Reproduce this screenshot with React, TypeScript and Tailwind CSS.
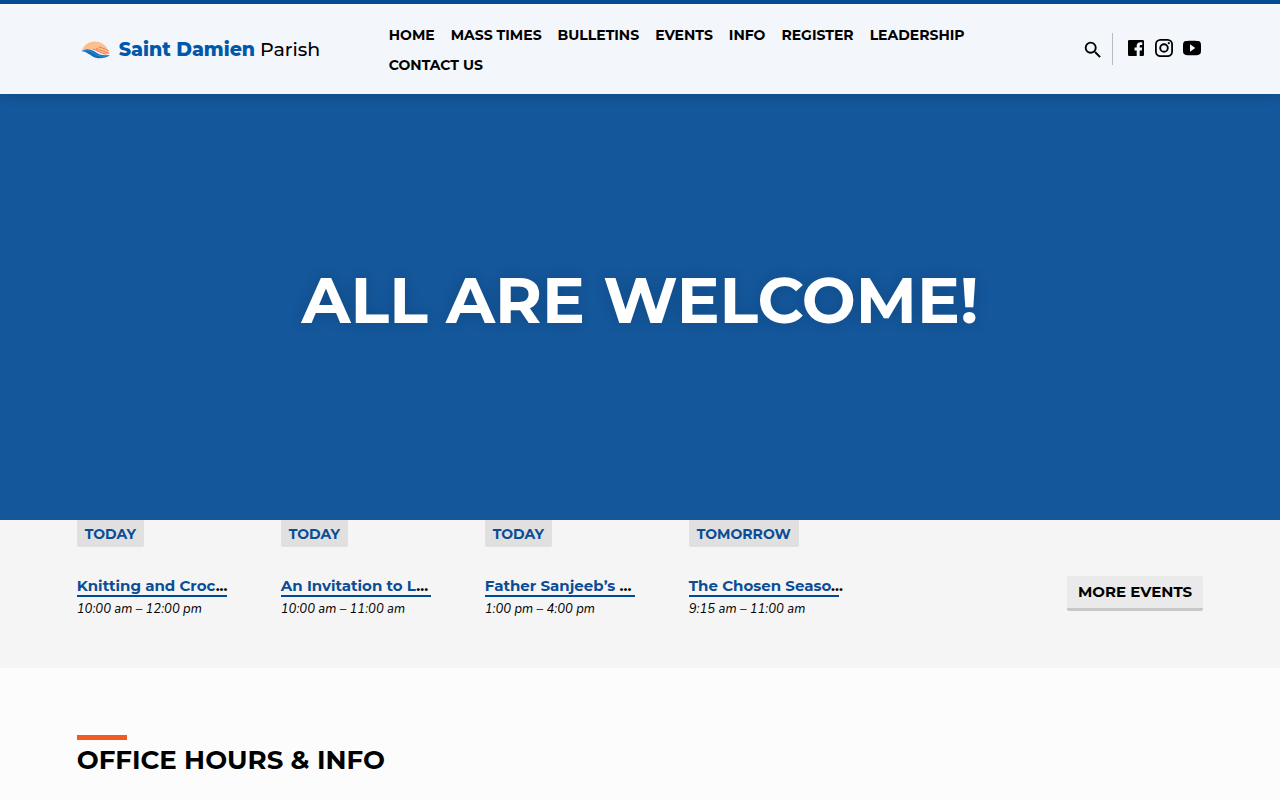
import { MdSearch } from "react-icons/md"

const heading = "font-['Montserrat','Inter',sans-serif]"

const navItems = ["Home", "Mass Times", "Bulletins", "Events", "Info", "Register", "Leadership", "Contact Us"]

const events = [
  { day: "Today", title: "Knitting and Croc", time: "10:00 am – 12:00 pm" },
  { day: "Today", title: "An Invitation to L", time: "10:00 am – 11:00 am" },
  { day: "Today", title: "Father Sanjeeb’s ", time: "1:00 pm – 4:00 pm" },
  { day: "Tomorrow", title: "The Chosen Seaso", time: "9:15 am – 11:00 am" },
]

function LogoMark() {
  return (
    <svg width="30" height="18" viewBox="0 0 30 18" aria-hidden="true">
      <path d="M0.500 9.500C3.500 3.500 8 0.500 13.500 0.500c6.500 0 10.500 3.500 13 7l-1 0.500 3 2-1.500 0.500 2 2-3.500 1C20 14 15 8.500 9 8.200 5.500 8 3 8 0.500 9.500Z" fill="#fcc08f" />
      <path d="M12 8c4 1 8 4.500 13.500 5.200M15 7.500c4 1 7.500 3.300 12.500 4.500M18 6c3.500 0.700 6 2.200 9.500 3.500" fill="none" stroke="#ee7552" strokeWidth="1" strokeDasharray="3 0.500" />
      <path d="M0.500 10.300C5 7.300 10 8 14 10.800c4 3 8 4.200 15 3.200-3 2.500-8 3.500-12 3.200C10.500 16.700 7 10.500 0.500 10.300Z" fill="#0f6fba" />
      <path d="M2 9.600c5-1.200 8 0.500 11.500 3s7 3 11 2.400" fill="none" stroke="#3c97d3" strokeWidth="0.800" />
    </svg>
  )
}

function FacebookIcon() {
  return (
    <svg width="18" height="18" viewBox="0 0 18 18" aria-hidden="true">
      <path d="M2.300 1h13.400A1.300 1.300 0 0 1 17 2.300v13.400a1.300 1.300 0 0 1-1.300 1.300h-3v-5.500h2.100l.4-3h-2.500V7.200c0-.7.300-1.100 1.300-1.100h1.300V3.300c-.4 0-1.100-.1-2-.1-2.200 0-3.600 1.200-3.600 3.500v1.800H7.500v3h2.200V17H2.300A1.300 1.300 0 0 1 1 15.700V2.300A1.300 1.300 0 0 1 2.300 1Z" />
    </svg>
  )
}

function InstagramIcon() {
  return (
    <svg width="18" height="18" viewBox="0 0 18 18" aria-hidden="true">
      <rect x="0.900" y="0.900" width="16.200" height="16.200" rx="4.500" fill="none" stroke="currentColor" strokeWidth="1.800" />
      <circle cx="9" cy="9" r="3.800" fill="none" stroke="currentColor" strokeWidth="1.900" />
      <circle cx="13.800" cy="4.200" r="1.100" />
    </svg>
  )
}

function YoutubeIcon() {
  return (
    <svg width="18" height="18" viewBox="0 0 18 18" aria-hidden="true">
      <path d="M3 2.100C6 1.600 12 1.600 15 2.100c1.800.2 2.700 1.100 2.900 2.900.2 2.600.2 5.400 0 8-.2 1.800-1.100 2.700-2.900 2.900-3 .5-9 .5-12 0C1.200 15.700.3 14.800.1 13c-.2-2.600-.2-5.400 0-8C.3 3.200 1.200 2.300 3 2.100ZM7 5.200v7.600L12.300 9Z" />
    </svg>
  )
}

function Header() {
  return (
    <header className="relative z-10 border-t-4 border-[#004b93] bg-[#f3f6fb] shadow-[0_1px_12px_rgba(0,0,0,0.15)]">
      <div className="mx-auto flex w-[88%] items-center">
        <a href="#" className={`flex w-[312px] shrink-0 items-center gap-2 pt-0.5 pl-1 text-[19px] whitespace-nowrap ${heading}`}>
          <LogoMark />
          <span>
            <span className="font-extrabold text-[#0058ab]">Saint Damien</span> <span className="font-medium">Parish</span>
          </span>
        </a>
        <nav className="flex-1 pt-4 pb-3.5">
          <ul className={`flex max-w-[620px] flex-wrap gap-x-4 text-sm leading-[30px] font-bold uppercase ${heading}`}>
            {navItems.map((item) => (
              <li key={item}>
                <a href="#">{item}</a>
              </li>
            ))}
          </ul>
        </nav>
        <div className="flex items-center">
          <button type="button" aria-label="Search" className="pt-0.5 pr-2">
            <MdSearch size={22} />
          </button>
          <div className="flex h-8 items-center gap-2.5 border-l border-[#b8bbc0] pr-0.5 pb-0.5 pl-3.5 *:fill-current">
            <a href="#" aria-label="Facebook">
              <FacebookIcon />
            </a>
            <a href="#" aria-label="Instagram">
              <InstagramIcon />
            </a>
            <a href="#" aria-label="YouTube">
              <YoutubeIcon />
            </a>
          </div>
        </div>
      </div>
    </header>
  )
}

export default function App() {
  return (
    <div className="min-h-screen bg-[#fcfcfc] text-black">
      <Header />

      {/* Hero */}
      <section className="flex h-[426px] items-center justify-center bg-[#14579b] pb-3.5">
        <h1 className={`text-center text-[64px] leading-none font-bold text-white uppercase [text-shadow:0_0_15px_rgba(0,0,0,0.15)] ${heading}`}>
          All are welcome!
        </h1>
      </section>

      {/* Upcoming events */}
      <section className="bg-[#f5f5f5]">
        <div className="mx-auto flex w-[88%] justify-between pb-[47px]">
          <ul className="flex gap-[54px]">
            {events.map((event) => (
              <li key={event.title} className="w-[150px]">
                <div className={`w-fit rounded-b-xs bg-[#e0e0e0] px-2 pt-px text-sm leading-[26px] font-bold text-[#0a4d96] uppercase ${heading}`}>
                  {event.day}
                </div>
                <h2 className={`mt-[30px] border-b-2 border-[#004b93] text-[15px] leading-[18px] font-bold whitespace-nowrap ${heading}`}>
                  <a href="#" className="text-[#0a4d96]">
                    {event.title}
                  </a>
                  ...
                </h2>
                <p className="font-['Nunito','Lato',sans-serif] text-[13px] leading-6 italic">{event.time}</p>
              </li>
            ))}
          </ul>
          <a href="#" className={`mt-14 h-[35px] rounded-xs border-b-[3px] border-[#c8c8c8] bg-[#eaeaea] px-[11px] text-[15px] leading-8 font-bold uppercase ${heading}`}>
            More Events
          </a>
        </div>
      </section>

      {/* Office hours */}
      <section className="mx-auto w-[88%] pt-[67px]">
        <div className="h-[5px] w-[50px] bg-[#f15a24]" />
        <h2 className={`mt-1 text-[26px] leading-8 font-bold uppercase ${heading}`}>Office Hours &amp; Info</h2>
      </section>
    </div>
  )
}
